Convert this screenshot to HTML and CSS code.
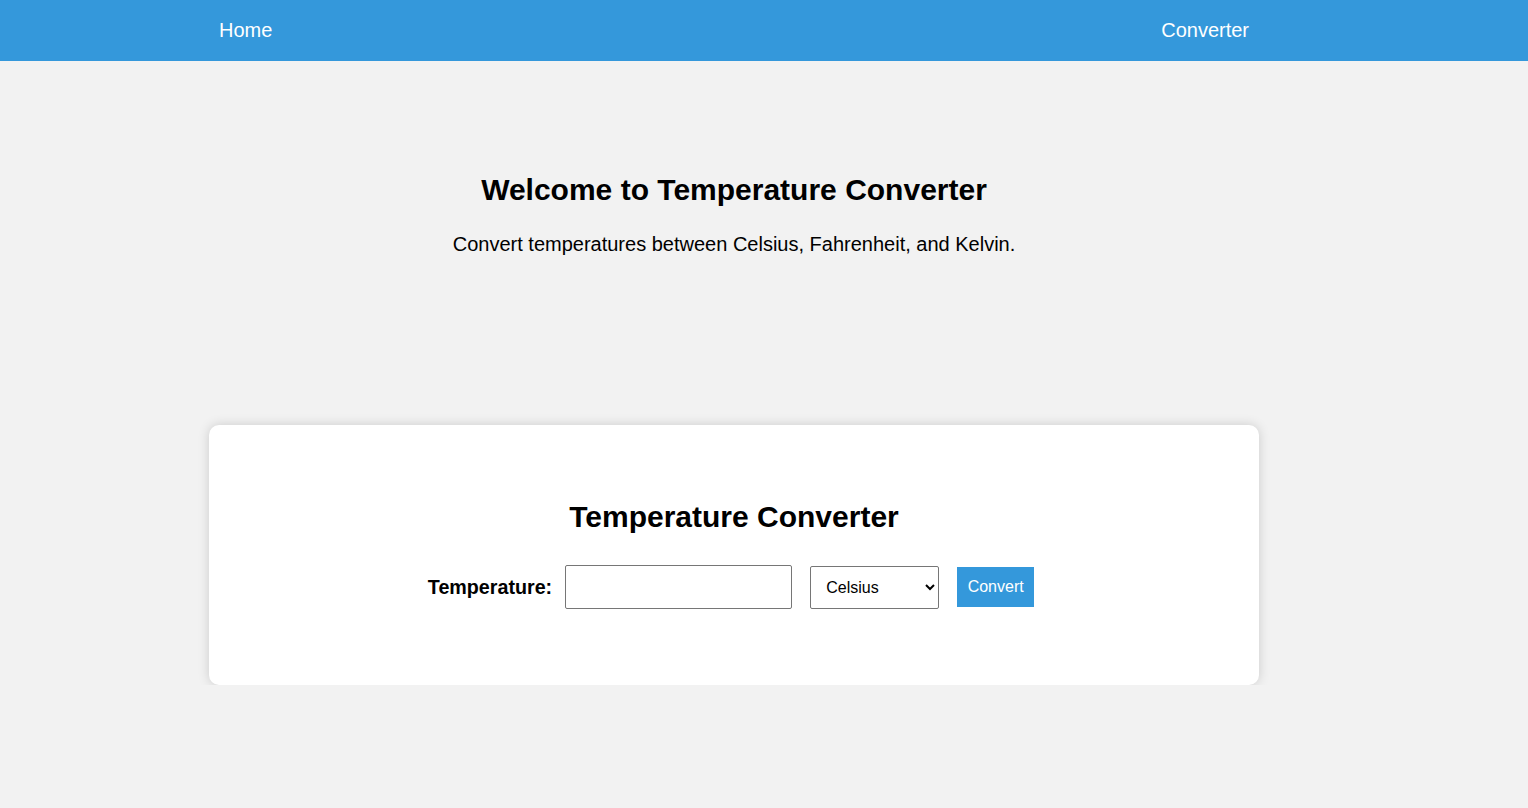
FILE: index.html
```html
<!DOCTYPE html>
<html lang="en">
<head>
<meta charset="utf-8">
<title>Temperature Converter</title>
<link rel="stylesheet" href="styles.css">
</head>
<body>
<header class="navbar">
  <nav class="nav-inner">
    <a class="nav-link" href="#">Home</a>
    <a class="nav-link" href="#">Converter</a>
  </nav>
</header>
<main class="page">
  <section class="hero">
    <h1 class="hero-title">Welcome to Temperature Converter</h1>
    <p class="hero-text">Convert temperatures between Celsius, Fahrenheit, and Kelvin.</p>
  </section>
  <section class="card">
    <h2 class="card-title">Temperature Converter</h2>
    <form class="form-row">
      <label class="form-label" for="temp">Temperature:</label>
      <input class="form-input" id="temp" type="text">
      <select class="form-select">
        <option>Celsius</option>
        <option>Fahrenheit</option>
        <option>Kelvin</option>
      </select>
      <button class="form-button" type="button">Convert</button>
    </form>
  </section>
</main>
</body>
</html>
```
FILE: styles.css
```css
* { box-sizing: border-box; }
html, body { margin: 0; padding: 0; }
body {
  background: #f2f2f2;
  font-family: "Liberation Sans", Arial, sans-serif;
  color: #000;
}
.navbar {
  background: #3498db;
  height: 61px;
}
.nav-inner {
  width: 1050px;
  margin-left: 209px;
  height: 61px;
  display: flex;
  justify-content: space-between;
  align-items: center;
  padding: 0 10px;
}
.nav-link {
  color: #fff;
  text-decoration: none;
  font-size: 20px;
}
.page {
  width: 1050px;
  margin-left: 209px;
}
.hero {
  text-align: center;
  padding-top: 112px;
}
.hero-title {
  margin: 0;
  font-size: 30px;
  font-weight: bold;
}
.hero-text {
  margin: 26px 0 0;
  font-size: 20px;
}
.card {
  margin-top: 169px;
  background: #fff;
  border-radius: 10px;
  box-shadow: 0 0 12px rgba(0,0,0,0.16);
  height: 260px;
  padding-top: 75px;
  text-align: center;
}
.card-title {
  margin: 0;
  font-size: 30px;
  font-weight: bold;
}
.form-row {
  margin-top: 31px;
  padding-right: 6px;
  display: flex;
  justify-content: center;
  align-items: center;
}
.form-label {
  font-size: 19.7px;
  font-weight: bold;
  margin-right: 13px;
}
.form-input {
  width: 227px;
  height: 44px;
  border: 1px solid #767676;
  border-radius: 2px;
  background: #fff;
  margin-right: 18px;
}
.form-select {
  width: 129px;
  height: 43px;
  border: 1px solid #767676;
  border-radius: 2px;
  background: #fff;
  font-family: "Liberation Sans", Arial, sans-serif;
  font-size: 16px;
  padding-left: 11px;
  margin-right: 18px;
}
.form-button {
  width: 77px;
  height: 40px;
  background: #3498db;
  color: #fff;
  border: none;
  font-family: "Liberation Sans", Arial, sans-serif;
  font-size: 16px;
}
```
